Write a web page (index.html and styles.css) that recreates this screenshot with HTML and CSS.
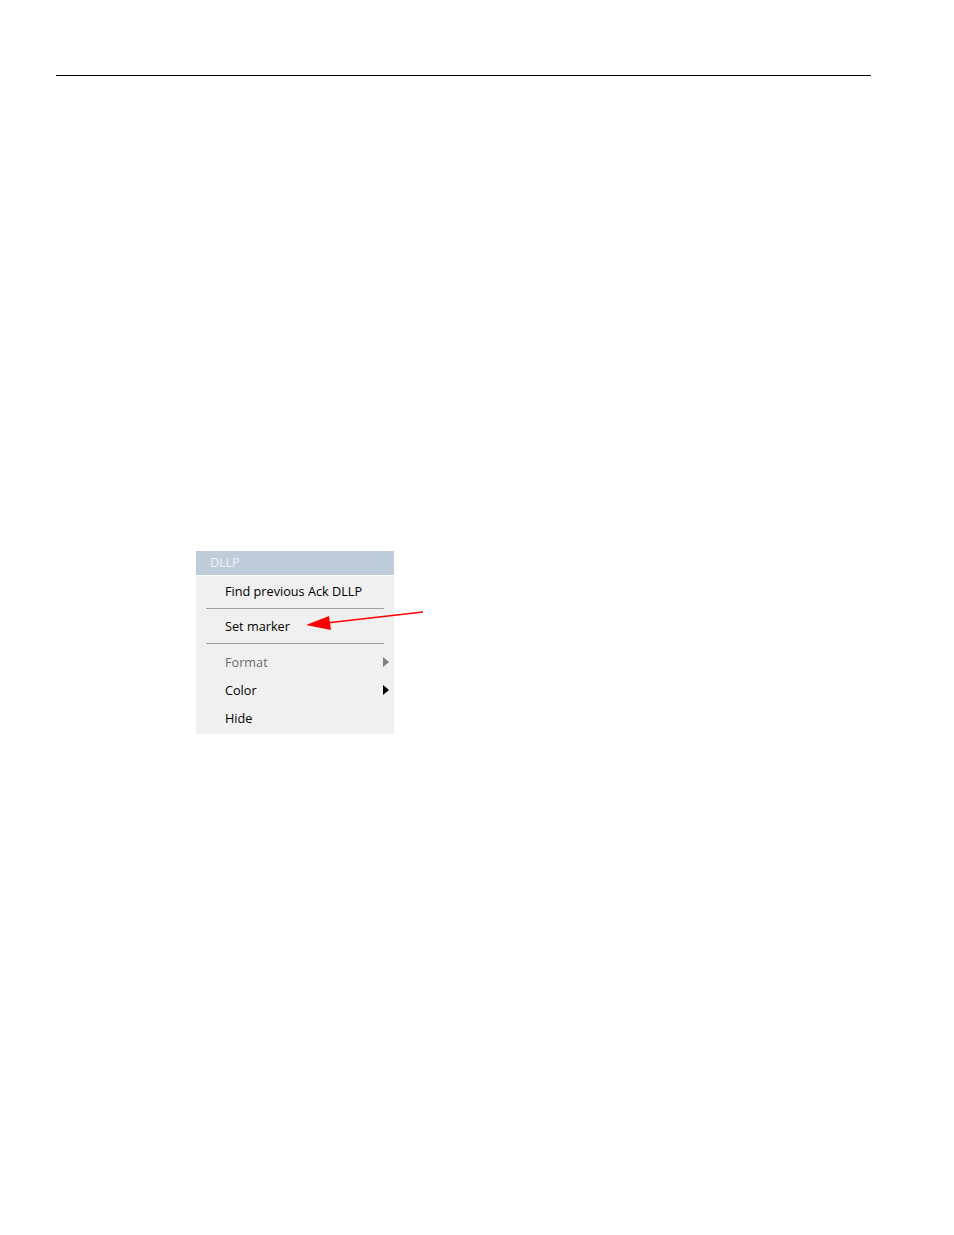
FILE: index.html
```html
<!DOCTYPE html>
<html lang="en">
<head>
    <meta charset="UTF-8">
    <title>DLLP menu</title>
    <link rel="stylesheet" href="styles.css">
</head>
<body>
    <div class="rule"></div>

    <div class="figure">
        <div class="menu">
            <div class="menu-head">DLLP</div>
            <div class="item first">Find previous Ack DLLP</div>
            <div class="sep"></div>
            <div class="item">Set marker</div>
            <div class="sep wide"></div>
            <div class="item disabled">Format <span class="sub"></span></div>
            <div class="item">Color <span class="sub"></span></div>
            <div class="item">Hide</div>
        </div>

        <!-- callout arrow -->
        <svg class="callout" width="140" height="30" viewBox="0 0 140 30">
            <line x1="127" y1="3" x2="26" y2="14.5" stroke="#ff0000" stroke-width="1.6"/>
            <polygon points="10,16 33,7 35,21" fill="#ff0000"/>
        </svg>
    </div>
</body>
</html>
```

FILE: styles.css
```css
body {
  margin: 0;
  background: #ffffff;
  font-family: "Open Sans", "Noto Sans", sans-serif;
}

.rule {
  margin: 75px 0 0 56px;
  width: 815px;
  height: 1px;
  background: #000000;
}

.figure {
  position: relative;
  margin: 475px 0 0 196px;
  width: 240px;
}

.menu {
  width: 198px;
  background: #f0f0f0;
  padding-bottom: 2px;
}

.menu-head {
  height: 24px;
  line-height: 23px;
  padding-left: 14px;
  background: #bfcdda;
  color: #eef2f6;
  font-size: 12.5px;
  border-bottom: 1px solid #ffffff;
}

.item {
  position: relative;
  height: 28px;
  line-height: 28px;
  padding-left: 29px;
  font-size: 12.7px;
  color: #000000;
}

.item.first {
  height: 29px;
  line-height: 31px;
}

.item.disabled {
  color: #6d6d6d;
}

.sep {
  height: 1px;
  margin: 3px 10px 3px 10px;
  background: #a0a0a0;
}

.sep.wide {
  margin-bottom: 4px;
}

.sep + .item {
  margin-top: 1px;
}

.sub {
  position: absolute;
  right: 5px;
  top: 9px;
  width: 0;
  height: 0;
  border-top: 5px solid transparent;
  border-bottom: 5px solid transparent;
  border-left: 6px solid #000000;
}

.disabled .sub {
  border-left-color: #808080;
}

.callout {
  position: absolute;
  left: 100px;
  top: 58px;
}
```
